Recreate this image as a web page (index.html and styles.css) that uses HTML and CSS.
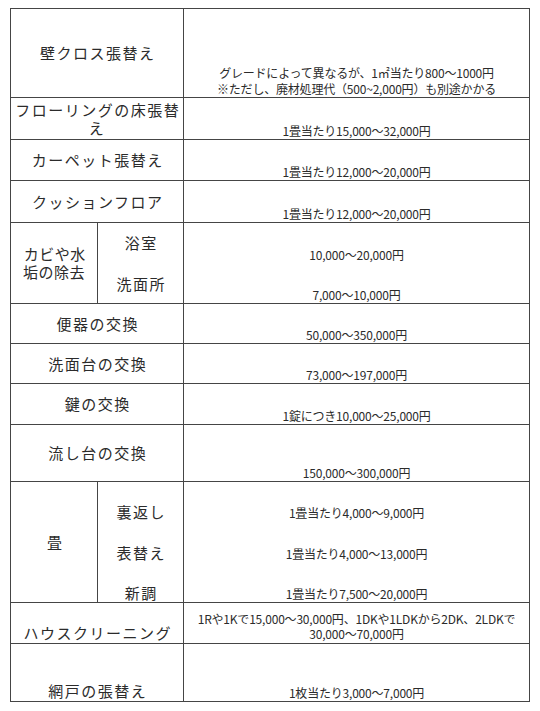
FILE: index.html
```html
<!DOCTYPE html>
<html lang="ja">
<head>
<meta charset="utf-8">
<title>リフォーム費用の目安</title>
<link rel="stylesheet" href="styles.css">
</head>
<body>
<table class="price-table">
  <colgroup>
    <col class="c-main">
    <col class="c-sub">
    <col class="c-val">
  </colgroup>
  <tbody>
    <tr class="h89">
      <td class="lbl" colspan="2">壁クロス張替え</td>
      <td class="val">グレードによって異なるが、1㎡当たり800～1000円<br>※ただし、廃材処理代（500~2,000円）も別途かかる</td>
    </tr>
    <tr class="h42">
      <td class="lbl" colspan="2">フローリングの床張替<br>え</td>
      <td class="val">1畳当たり15,000～32,000円</td>
    </tr>
    <tr class="h41">
      <td class="lbl" colspan="2">カーペット張替え</td>
      <td class="val">1畳当たり12,000～20,000円</td>
    </tr>
    <tr class="h42">
      <td class="lbl" colspan="2">クッションフロア</td>
      <td class="val">1畳当たり12,000～20,000円</td>
    </tr>
    <tr class="h41">
      <td class="lbl group" rowspan="2">カビや水<br>垢の除去</td>
      <td class="lbl sub open-b">浴室</td>
      <td class="val open-b">10,000～20,000円</td>
    </tr>
    <tr class="h40">
      <td class="lbl sub">洗面所</td>
      <td class="val">7,000～10,000円</td>
    </tr>
    <tr class="h40">
      <td class="lbl" colspan="2">便器の交換</td>
      <td class="val">50,000～350,000円</td>
    </tr>
    <tr class="h40">
      <td class="lbl" colspan="2">洗面台の交換</td>
      <td class="val">73,000～197,000円</td>
    </tr>
    <tr class="h41">
      <td class="lbl" colspan="2">鍵の交換</td>
      <td class="val">1錠につき10,000～25,000円</td>
    </tr>
    <tr class="h57">
      <td class="lbl" colspan="2">流し台の交換</td>
      <td class="val">150,000～300,000円</td>
    </tr>
    <tr class="h40">
      <td class="lbl group" rowspan="3">畳</td>
      <td class="lbl sub low open-b">裏返し</td>
      <td class="val low open-b">1畳当たり4,000～9,000円</td>
    </tr>
    <tr class="h41">
      <td class="lbl sub low open-b">表替え</td>
      <td class="val low open-b">1畳当たり4,000～13,000円</td>
    </tr>
    <tr class="h40">
      <td class="lbl sub low">新調</td>
      <td class="val low">1畳当たり7,500～20,000円</td>
    </tr>
    <tr class="h41">
      <td class="lbl bottom" colspan="2">ハウスクリーニング</td>
      <td class="val two">1Rや1Kで15,000～30,000円、1DKや1LDKから2DK、2LDKで<br>30,000～70,000円</td>
    </tr>
    <tr class="h58">
      <td class="lbl bottom" colspan="2">網戸の張替え</td>
      <td class="val">1枚当たり3,000～7,000円</td>
    </tr>
  </tbody>
</table>
</body>
</html>
```

FILE: styles.css
```css
html, body {
  background: #ffffff;
}

body {
  margin: 8px 0 0 10px;
  font-family: "Noto Sans CJK JP", "Noto Sans", sans-serif;
  color: #2b2b2b;
}

.price-table {
  width: 519px;
  table-layout: fixed;
  border-collapse: collapse;
  border: 1px solid #454545;
}

.c-main { width: 87px; }
.c-sub { width: 86px; }
.c-val { width: 346px; }

.price-table td {
  border: 1px solid #454545;
  padding: 0 2px;
  text-align: center;
  overflow: hidden;
}

.h89 { height: 89px; }
.h58 { height: 58px; }
.h57 { height: 57px; }
.h42 { height: 42px; }
.h41 { height: 41px; }
.h40 { height: 40px; }

.lbl {
  font-size: 15px;
  line-height: 18px;
  letter-spacing: 1.5px;
  text-indent: 1.5px;
  vertical-align: middle;
}

.lbl.group {
  letter-spacing: 0.5px;
}

.lbl.bottom {
  vertical-align: bottom;
  padding-bottom: 1px;
}

.val {
  font-size: 12px;
  line-height: 16px;
  letter-spacing: -0.2px;
  vertical-align: bottom;
  padding-bottom: 2px;
}

.val.two {
  line-height: 15px;
  padding-bottom: 2px;
}

.low {
  vertical-align: bottom;
  padding-bottom: 2px;
}

.price-table td.open-b {
  border-bottom-color: transparent;
}

.price-table td.open-b + td.open-b {
  border-bottom-color: transparent;
}
```
